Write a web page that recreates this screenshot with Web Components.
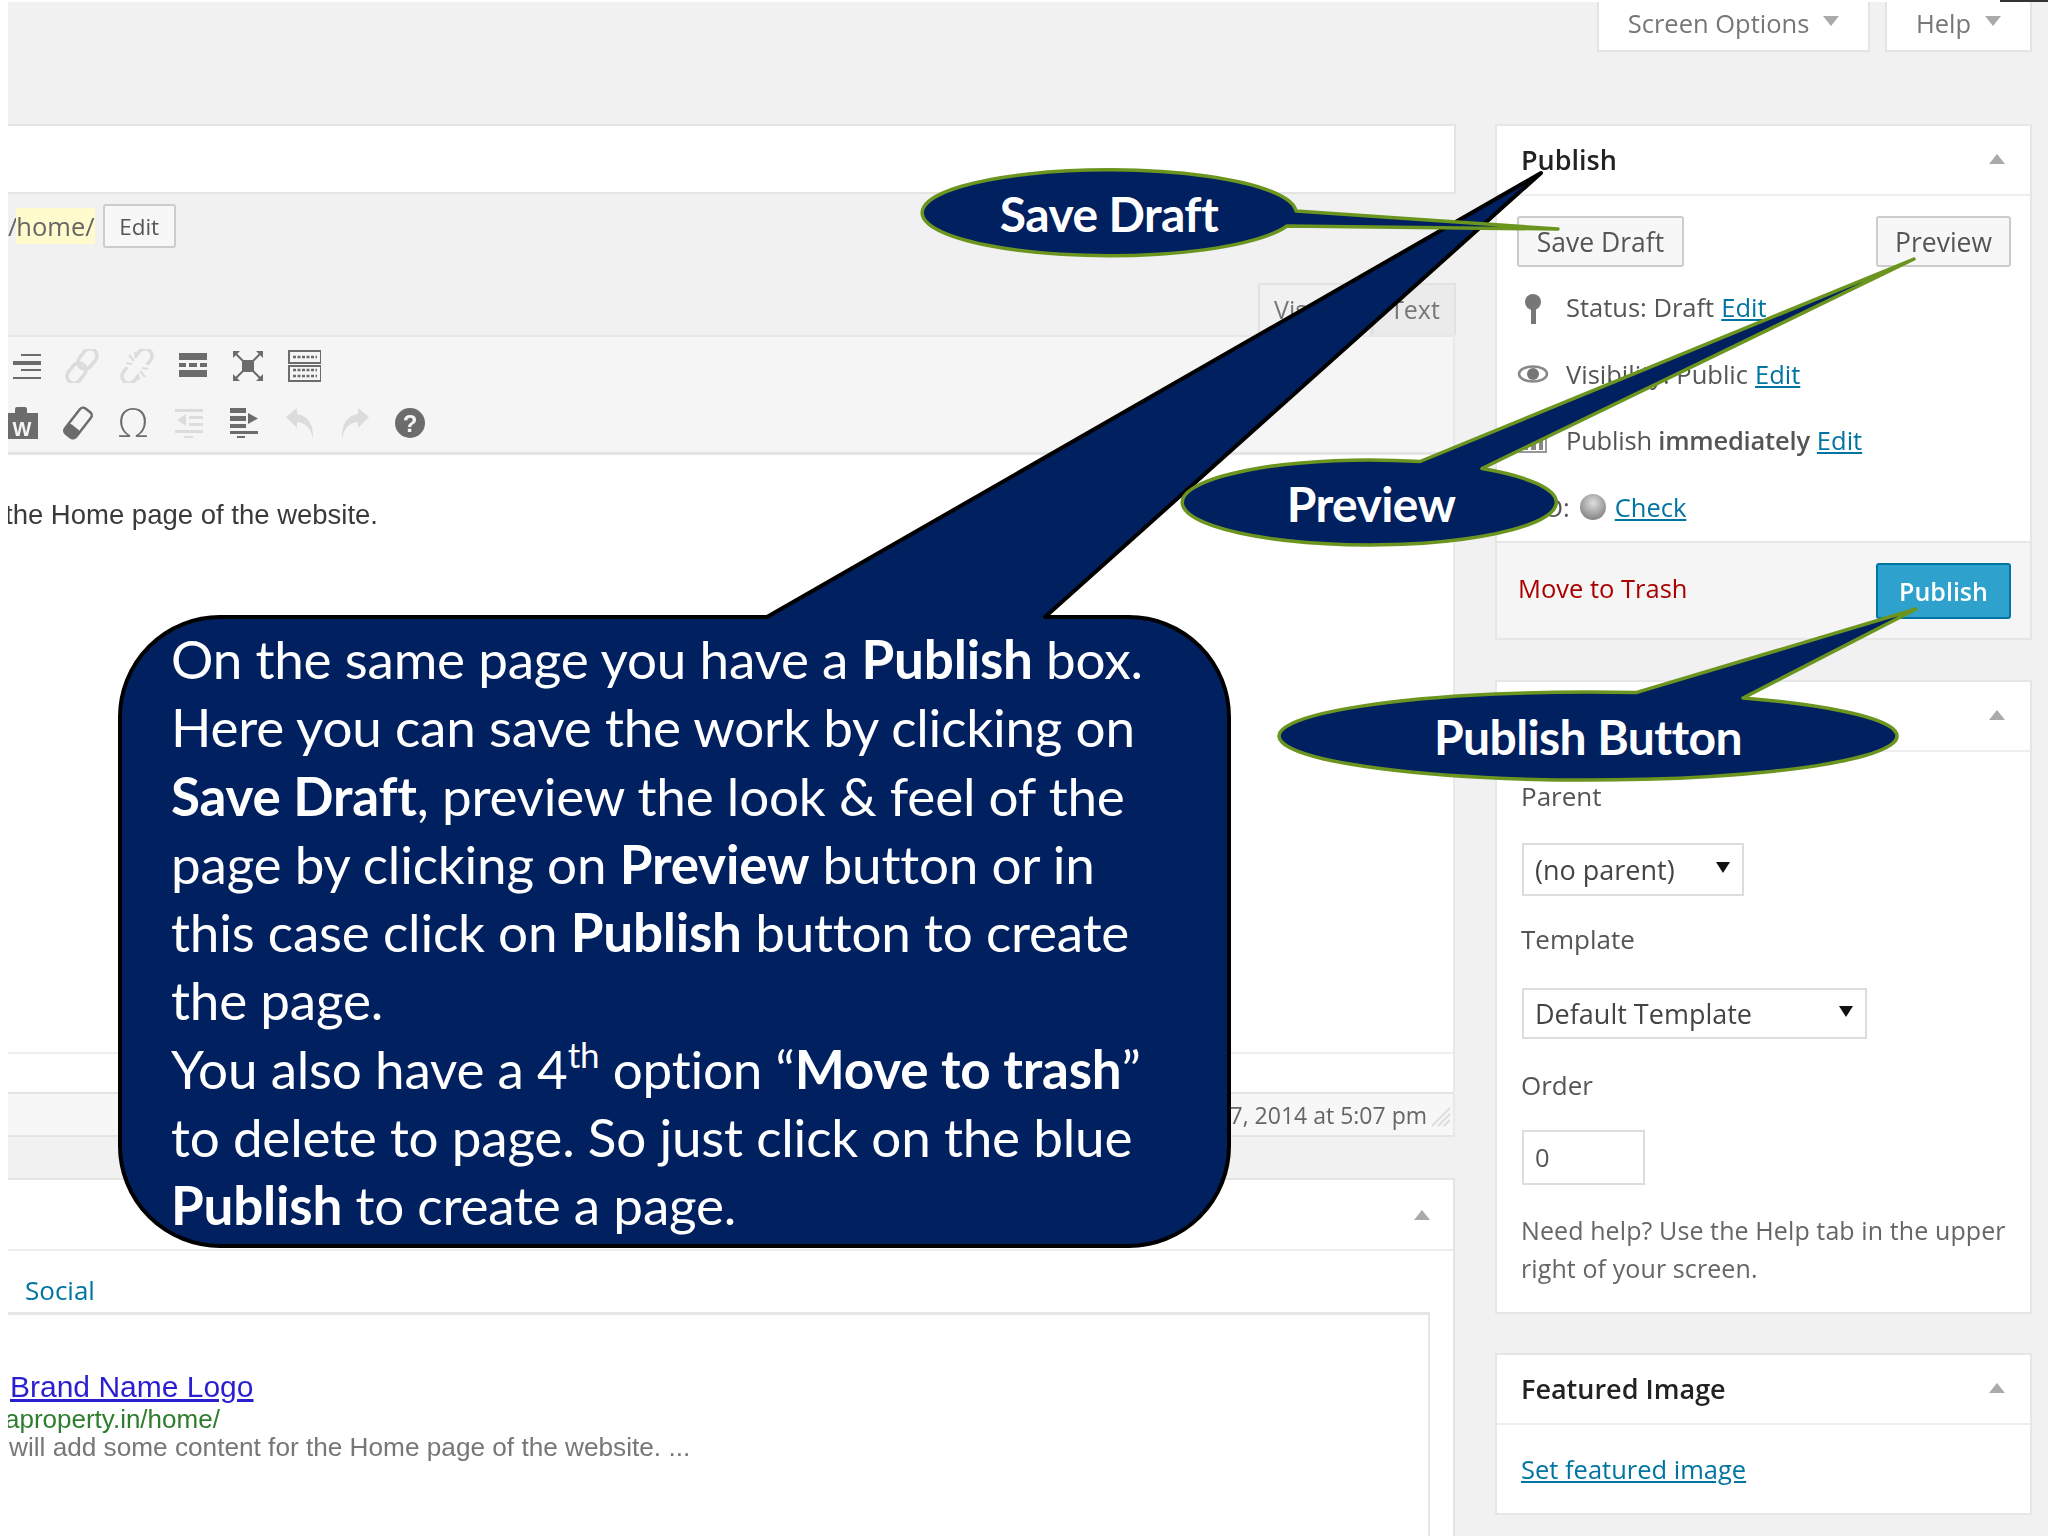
<!DOCTYPE html>
<html>
<head>
<meta charset="utf-8">
<title>Publish box</title>
<style>
  html, body { margin: 0; background: #fff; }
  body { width: 2048px; height: 1536px; overflow: hidden; font-family: "Open Sans", sans-serif; color: #444; }
</style>
</head>
<body>
<wp-page>
  <wp-screen-tab slot="tabs" style="width:273px">Screen Options</wp-screen-tab>
  <wp-screen-tab slot="tabs" style="width:147px">Help</wp-screen-tab>
  <wp-editor slot="main"></wp-editor>
  <wp-sidebar slot="side"></wp-sidebar>
</wp-page>
<wp-callouts></wp-callouts>

<script>
// toolbar icons, all on a 34 box
const ICONS = {
  alignright: '<rect x="11" y="5" width="20" height="2"/><rect x="3" y="12" width="28" height="4"/><rect x="11" y="20" width="20" height="2"/><rect x="3" y="28" width="28" height="2"/>',
  link: '<g fill="none" stroke="currentColor" stroke-width="3.500" transform="rotate(-52 17 17)"><rect x="-3" y="10" width="22" height="14" rx="7"/><rect x="15" y="10" width="22" height="14" rx="7"/></g>',
  unlink: '<g fill="none" stroke="currentColor" stroke-width="3.500" transform="rotate(-52 17 17)"><path d="M10 10H4a7 7 0 0 0 0 14h6"/><path d="M24 10h6a7 7 0 0 1 0 14h-6"/></g><path d="M9 6l5 6M6 14l6 1M15 3l1 6M25 28l-5-6M28 20l-6-1M19 31l-1-6" stroke="currentColor" stroke-width="2"/>',
  more: '<rect x="3" y="4" width="28" height="7"/><rect x="3" y="14" width="7" height="4"/><rect x="13" y="14" width="8" height="4"/><rect x="24" y="14" width="7" height="4"/><rect x="3" y="21" width="28" height="7"/>',
  fullscreen: '<rect x="11" y="11" width="12" height="12"/><path d="M4 4l26 26M30 4L4 30" stroke="currentColor" stroke-width="2"/><path d="M2 2h7l-7 7zM32 2v7l-7-7zM2 32v-7l7 7zM32 32h-7l7-7z"/>',
  kitchen: '<g fill="none" stroke="currentColor" stroke-width="2"><rect x="2" y="2" width="32" height="12"/><rect x="2" y="17" width="32" height="15"/></g><path d="M6 8h24M6 21h24M6 27h24" stroke="currentColor" stroke-width="2.5" stroke-dasharray="3 1.5"/>',
  word: '<path d="M0 7h9V3a2 2 0 0 1 2-2h8a2 2 0 0 1 2 2v4h11v26H0z"/><text x="16" y="30" text-anchor="middle" font-family="Liberation Sans" font-weight="700" font-size="20" fill="#f5f5f5">W</text>',
  eraser: '<g transform="rotate(38 17 17)"><rect x="10" y="1" width="14" height="32" rx="4" fill="none" stroke="currentColor" stroke-width="2.500"/><rect x="10" y="22" width="14" height="11" rx="3"/></g>',
  omega: '<text x="17" y="31" text-anchor="middle" font-family="Open Sans" font-weight="300" font-size="40" fill="currentColor">Ω</text>',
  outdent: '<rect x="3" y="3" width="28" height="3"/><rect x="17" y="10" width="14" height="3"/><rect x="17" y="17" width="14" height="3"/><rect x="3" y="24" width="28" height="3"/><path d="M14 8v12l-9-6z"/><rect x="12" y="30" width="9" height="2"/>',
  indent: '<rect x="3" y="2" width="16" height="5"/><rect x="3" y="10" width="16" height="5"/><rect x="3" y="18" width="16" height="4"/><rect x="3" y="25" width="28" height="3"/><path d="M21 7v11l10-5.500z"/><rect x="10" y="30" width="8" height="2"/>',
  undo: '<path d="M3 11L14 2v6c10 1 17 10 16 25-2-11-7-16-16-17v6z"/>',
  redo: '<path d="M31 11L20 2v6C10 9 3 18 4 33c2-11 7-16 16-17v6z"/>',
  help: '<circle cx="17" cy="17" r="15"/><text x="17" y="26" text-anchor="middle" font-family="Liberation Sans" font-weight="700" font-size="24" fill="#f5f5f5">?</text>'
};

class WpPage extends HTMLElement {
  constructor() {
    super();
    this.attachShadow({ mode: 'open' });
    this.shadowRoot.innerHTML = `
      <style>
        :host {
          display: grid;
          grid-template-columns: 1448px 537px;
          grid-template-rows: 50px 1fr;
          column-gap: 39px;
          row-gap: 72px;
          width: 2040px;
          height: 1534px;
          margin: 2px 0 0 8px;
          background: #f1f1f1;
          overflow: hidden;
          filter: blur(.45px);
          position: relative;
        }
        .tabs { grid-column: 1 / 3; display: flex; justify-content: flex-end; gap: 15px; }
      </style>
      <div class="tabs"><slot name="tabs"></slot></div>
      <slot name="main"></slot>
      <slot name="side"></slot>`;
  }
}

class WpScreenTab extends HTMLElement {
  constructor() {
    super();
    this.attachShadow({ mode: 'open' });
    this.shadowRoot.innerHTML = `
      <style>
        :host {
          display: flex;
          align-items: center;
          justify-content: center;
          gap: 14px;
          box-sizing: border-box;
          height: 50px;
          padding: 0 0 6px 0;
          background: #fff;
          border: 2px solid #e4e4e4;
          border-top: 0;
          font-size: 25.500px;
          color: #777;
        }
        i { width: 0; height: 0; border: 8px solid transparent; border-top: 10px solid #aaa; border-bottom: 0; margin-top: -4px; }
      </style>
      <slot></slot><i></i>`;
  }
}

class WpButton extends HTMLElement {
  constructor() {
    super();
    this.attachShadow({ mode: 'open' });
    this.shadowRoot.innerHTML = `
      <style>
        :host {
          display: inline-flex;
          align-items: center;
          justify-content: center;
          box-sizing: border-box;
          height: 50px;
          background: #f7f7f7;
          border: 2px solid #ccc;
          border-radius: 3px;
          font-size: 26.500px;
          color: #555;
        }
        :host([primary]) { height: 56px; background: #2ea2cc; border-color: #0074a2; color: #fff; font-size: 25px; font-weight: 600; }
        :host([small]) { height: 44px; font-size: 22.500px; }
      </style>
      <slot></slot>`;
  }
}

class WpToolbar extends HTMLElement {
  constructor() {
    super();
    this.attachShadow({ mode: 'open' });
    const row = (names) => names.map(n => {
      const off = n.endsWith('-');
      const name = off ? n.slice(0, -1) : n;
      return `<b class="${off ? 'off' : ''}"><svg width="34" height="34" viewBox="0 0 34 34" fill="currentColor">${ICONS[name]}</svg></b>`;
    }).join('');
    this.shadowRoot.innerHTML = `
      <style>
        :host { display: block; height: 120px; box-sizing: border-box; background: #f5f5f5; border-bottom: 3px solid #e4e4e4; border-top: 2px solid #e8e8e8; overflow: hidden; }
        .row { display: flex; height: 57px; align-items: center; margin-left: -9px; }
        .row + .row { margin-left: -13px; }
        b { flex: 0 0 55.400px; display: flex; justify-content: center; color: #6c6c6c; }
        b.off { color: #dcdcdc; }
      </style>
      <div class="row">${row(['alignright', 'link-', 'unlink-', 'more', 'fullscreen', 'kitchen'])}</div>
      <div class="row">${row(['word', 'eraser', 'omega', 'outdent-', 'indent', 'undo-', 'redo-', 'help'])}</div>`;
  }
}

class WpEditor extends HTMLElement {
  constructor() {
    super();
    this.attachShadow({ mode: 'open' });
    this.shadowRoot.innerHTML = `
      <style>
        :host { display: block; overflow: hidden; height: 100%; font-size: 25.500px; }
        .title { height: 70px; background: #fff; border: solid #e4e4e4; border-width: 2px 2px 2px 0; box-sizing: border-box; }
        .perma { height: 141px; display: flex; flex-direction: column; }
        .slug { display: flex; align-items: center; height: 44px; margin-top: 10px; color: #666; }
        .slug span { background: #fffbcc; margin-left: -1px; line-height: 36px; }
        .slug em { font-style: normal; }
        .slug wp-button { width: 73px; margin-left: 8px; }
        .tabs { margin-top: auto; align-self: flex-end; display: flex; }
        .tabs div { height: 52px; box-sizing: border-box; padding: 7px 0 0 14px; background: #ebebeb; border: 2px solid #e2e2e2; border-bottom: 0; color: #777; font-size: 25px; line-height: 34px; }
        .tabs .v { width: 114px; background: #f1f1f1; }
        .tabs .t { width: 84px; padding-left: 16px; }
        .edit { width: 1447px; border-right: 2px solid #e8e8e8; box-sizing: border-box; background: #fff; }
        .text { height: 597px; box-sizing: border-box; padding-top: 43px; font: 27.500px/34px "Liberation Sans", sans-serif; color: #3a3a3a; margin-left: -3px; }
        .count { height: 40px; border-top: 2px solid #eee; box-sizing: border-box; }
        .status { height: 45px; box-sizing: border-box; display: flex; align-items: center; justify-content: flex-end; gap: 3px; padding-right: 1px; background: #f7f7f7; border: solid #e4e4e4; border-width: 2px 0; color: #666; font-size: 23px; }
        .status svg { margin-top: 4px; }
        .box { width: 1447px; height: 400px; margin-top: 41px; background: #fff; border: solid #e4e4e4; border-width: 2px 2px 0 0; box-sizing: border-box; }
        .head { height: 71px; box-sizing: border-box; border-bottom: 2px solid #eee; display: flex; align-items: center; justify-content: flex-end; padding-right: 23px; }
        .head i { width: 0; height: 0; border: 8px solid transparent; border-bottom: 10px solid #aaa; border-top: 0; }
        .social { height: 64px; box-sizing: border-box; padding: 23px 0 0 17px; line-height: 32px; color: #0074a2; font-size: 26px; border-bottom: 3px solid #e6e6e6; width: 1422px; }
        .prev { width: 1422px; height: 300px; box-sizing: border-box; border-right: 2px solid #e6e6e6; padding-top: 53px; font-family: "Liberation Sans", sans-serif; overflow: hidden; }
        .prev a { display: block; margin-left: 2px; font-size: 30px; line-height: 37px; color: #2a1fd0; text-decoration: underline; }
        .prev .url { font-size: 26px; line-height: 29px; color: #2e7d2e; margin-left: -3px; }
        .prev .desc { font-size: 26.200px; line-height: 27px; color: #777; margin-left: 1px; }
      </style>
      <div class="title"></div>
      <div class="perma">
        <div class="slug"><em>/</em><span>home/</span><wp-button small>Edit</wp-button></div>
        <div class="tabs"><div class="v">Visual</div><div class="t">Text</div></div>
      </div>
      <div class="edit">
        <wp-toolbar></wp-toolbar>
        <div class="text">the Home page of the website.</div>
        <div class="count"></div>
        <div class="status"><span>7, 2014 at 5:07 pm</span>
          <svg width="22" height="22" viewBox="0 0 22 22" stroke="#ddd" stroke-width="2"><path d="M2 20L20 2M8 20L20 8M14 20l6-6"/></svg></div>
      </div>
      <div class="box">
        <div class="head"><i></i></div>
        <div class="social">Social</div>
        <div class="prev">
          <a>Brand Name Logo</a>
          <div class="url">aproperty.in/home/</div>
          <div class="desc">will add some content for the Home page of the website. ...</div>
        </div>
      </div>`;
  }
}

class WpPostbox extends HTMLElement {
  constructor() {
    super();
    this.attachShadow({ mode: 'open' });
    this.shadowRoot.innerHTML = `
      <style>
        :host { display: block; background: #fff; border: 2px solid #e6e6e6; box-sizing: border-box; margin-bottom: 40px; }
        .head { height: 70px; box-sizing: border-box; border-bottom: 2px solid #eee; display: flex; align-items: center; justify-content: space-between; padding: 0 25px 2px 24px; font-size: 27px; font-weight: 600; color: #222; }
        i { width: 0; height: 0; border: 8px solid transparent; border-bottom: 10px solid #aaa; border-top: 0; }
      </style>
      <div class="head"><span><slot name="title"></slot></span><i></i></div>
      <slot></slot>`;
  }
}

class WpMiscRow extends HTMLElement {
  constructor() {
    super();
    this.attachShadow({ mode: 'open' });
    this.shadowRoot.innerHTML = `
      <style>
        :host { display: flex; align-items: center; height: 66.600px; box-sizing: border-box; padding-left: 20px; font-size: 25.500px; color: #555; }
        :host([bare]) .ic { display: none; }
        .ic { flex: 0 0 49px; display: flex; }
        ::slotted(a) { color: #0074a2; text-decoration: underline; margin-left: 7px; }
      </style>
      <div class="ic"><slot name="icon"></slot></div><slot></slot>`;
  }
}

class WpSelect extends HTMLElement {
  constructor() {
    super();
    this.attachShadow({ mode: 'open' });
    this.shadowRoot.innerHTML = `
      <style>
        :host { display: flex; align-items: center; justify-content: space-between; box-sizing: border-box; background: #fff; border: 2px solid #ddd; padding: 0 12px 0 11px; font-size: 27px; color: #444; }
        i { width: 0; height: 0; border: 7px solid transparent; border-top: 11px solid #111; border-bottom: 0; margin-top: -4px; }
      </style>
      <slot></slot><i></i>`;
  }
}

class WpSidebar extends HTMLElement {
  constructor() {
    super();
    this.attachShadow({ mode: 'open' });
    this.shadowRoot.innerHTML = `
      <style>
        :host { display: block; font-size: 25.500px; color: #555; }
        a { color: #0074a2; text-decoration: underline; }
        .acts { display: flex; justify-content: space-between; padding: 20px 19px 7px 20px; }
        .acts wp-button { height: 51px; }
        .save { width: 167px; }
        .prev { width: 135px; }
        .foot { height: 97px; margin-top: 1px; box-sizing: border-box; background: #f5f5f5; border-top: 2px solid #e6e6e6; display: flex; align-items: center; justify-content: space-between; padding: 0 19px 0 21px; }
        .trash { color: #a00; margin-top: -5px; }
        .foot wp-button { width: 135px; }
        .body { padding: 25px 25px 25px 24px; }
        .lab { line-height: 38px; font-size: 26px; color: #555; }
        wp-select { margin: 28px 0 24px 1px; }
        .num { width: 123px; height: 55px; margin: 26px 0 26px 1px; box-sizing: border-box; border: 2px solid #ddd; padding-left: 11px; line-height: 50px; color: #555; }
        .help { line-height: 38px; font-size: 25px; color: #666; width: 505px; letter-spacing: .1px; }
        .ball { display: inline-block; width: 26px; height: 26px; border-radius: 50%; margin: 0 9px 0 10px; background: radial-gradient(circle at 50% 35%, #ddd, #888 75%); }
        .feat { height: 88px; box-sizing: border-box; padding: 25px 24px 0; line-height: 38px; }
      </style>
      <wp-postbox>
        <span slot="title">Publish</span>
        <div class="acts"><wp-button class="save">Save Draft</wp-button><wp-button class="prev">Preview</wp-button></div>
        <wp-misc-row>
          <svg slot="icon" width="32" height="30" viewBox="0 0 32 30" fill="#777" style="margin-top:4px"><circle cx="16" cy="8" r="8"/><rect x="14" y="10" width="5" height="20"/></svg>
          Status: Draft <a href="#">Edit</a>
        </wp-misc-row>
        <wp-misc-row>
          <svg slot="icon" width="32" height="18" viewBox="0 0 32 18"><ellipse cx="16" cy="9" rx="14" ry="7.500" fill="none" stroke="#888" stroke-width="2.500"/><circle cx="16" cy="9" r="6" fill="#777"/></svg>
          Visibility: Public <a href="#">Edit</a>
        </wp-misc-row>
        <wp-misc-row>
          <svg slot="icon" width="30" height="26" viewBox="0 0 30 26" fill="#888"><path d="M1 1h28v24H1z" fill="none" stroke="#999" stroke-width="2"/><rect x="6" y="10" width="5" height="13"/><rect x="14" y="10" width="5" height="13"/><rect x="22" y="10" width="4" height="13"/></svg>
          <span style="letter-spacing:-.2px">Publish <b style="font-weight:600">immediately</b></span> <a href="#">Edit</a>
        </wp-misc-row>
        <wp-misc-row bare style="padding-left:18px"><span>SEO:</span><span class="ball"></span><a href="#" style="margin:0">Check</a></wp-misc-row>
        <div class="foot"><span class="trash">Move to Trash</span><wp-button primary>Publish</wp-button></div>
      </wp-postbox>
      <wp-postbox style="margin-bottom:39px">
        <div class="body">
          <div class="lab">Parent</div>
          <wp-select style="width:222px;height:53px">(no parent)</wp-select>
          <div class="lab">Template</div>
          <wp-select style="width:345px;height:51px;margin-top:30px;margin-bottom:27px">Default Template</wp-select>
          <div class="lab">Order</div>
          <div class="num">0</div>
          <div class="help">Need help? Use the Help tab in the upper right of your screen.</div>
        </div>
      </wp-postbox>
      <wp-postbox>
        <span slot="title">Featured Image</span>
        <div class="feat"><a href="#">Set featured image</a></div>
      </wp-postbox>`;
  }
}

class WpCallouts extends HTMLElement {
  constructor() {
    super();
    this.attachShadow({ mode: 'open' });
    this.shadowRoot.innerHTML = `
      <style>
        :host { position: absolute; left: 0; top: 0; width: 2048px; height: 1536px; overflow: hidden; color: #fff; font-family: Lato, sans-serif; }
        svg { position: absolute; left: 0; top: 0; }
        .label { position: absolute; transform: translate(-50%, -50%); font-size: 48px; font-weight: 700; white-space: nowrap; letter-spacing: -.6px; }
        .big { position: absolute; left: 171px; top: 625px; font-size: 53px; line-height: 68.250px; white-space: nowrap; letter-spacing: -.2px; }
        .big div { height: 68.250px; }
        sup { font-size: 35px; line-height: 0; vertical-align: 21px; }
        .top { position: absolute; right: 0; top: 0; width: 48px; height: 2px; background: #333; }
      </style>
      <svg width="2048" height="1536" viewBox="0 0 2048 1536">
        <path fill="#002060" stroke="#000" stroke-width="4" stroke-linejoin="round"
          d="M220 617H767L1541 173L1045 617H1129A100 100 0 0 1 1229 717V1146A100 100 0 0 1 1129 1246H220A100 100 0 0 1 120 1146V717A100 100 0 0 1 220 617Z"/>
        <g fill="#002060" stroke="#6b951f" stroke-width="3.500" stroke-linejoin="round">
          <path d="M1296 211L1558 229L1287 226A187 43 0 1 1 1296 211Z"/>
          <path d="M1420 461.500L1914 259L1482 468.500A187 42.500 0 1 1 1420 461.500Z"/>
          <path d="M1636 692.600L1916 609L1743 698A309 44 0 1 1 1636 692.600Z"/>
        </g>
      </svg>
      <div class="top"></div>
      <div class="label" style="left:1109px;top:213px">Save Draft</div>
      <div class="label" style="left:1371px;top:503px">Preview</div>
      <div class="label" style="left:1588px;top:736px">Publish Button</div>
      <div class="big">
        <div>On the same page you have a <b>Publish</b> box.</div>
        <div>Here you can save the work by clicking on</div>
        <div><b>Save Draft</b>, preview the look &amp; feel of the</div>
        <div>page by clicking on <b>Preview</b> button or in</div>
        <div>this case click on <b>Publish</b> button to create</div>
        <div>the page.</div>
        <div>You also have a 4<sup>th</sup> option “<b>Move to trash</b>”</div>
        <div>to delete to page. So just click on the blue</div>
        <div><b>Publish</b> to create a page.</div>
      </div>`;
  }
}

customElements.define('wp-page', WpPage);
customElements.define('wp-screen-tab', WpScreenTab);
customElements.define('wp-button', WpButton);
customElements.define('wp-toolbar', WpToolbar);
customElements.define('wp-editor', WpEditor);
customElements.define('wp-postbox', WpPostbox);
customElements.define('wp-misc-row', WpMiscRow);
customElements.define('wp-select', WpSelect);
customElements.define('wp-sidebar', WpSidebar);
customElements.define('wp-callouts', WpCallouts);
</script>
</body>
</html>
